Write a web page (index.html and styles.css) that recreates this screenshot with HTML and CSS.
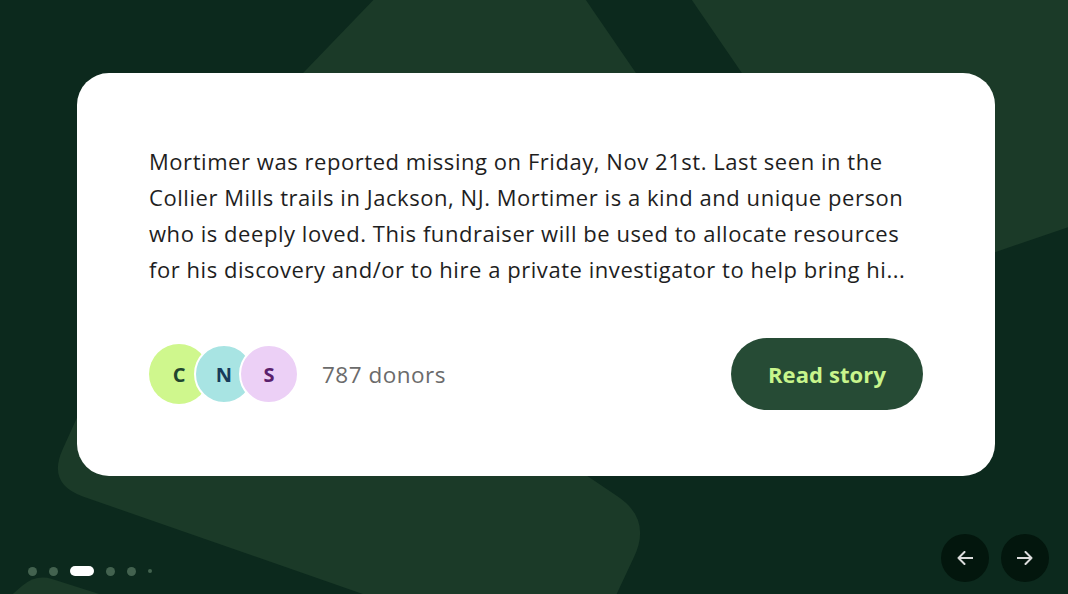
FILE: index.html
```html
<!DOCTYPE html>
<html lang="en">
<head>
<meta charset="utf-8">
<title>Story</title>
<link rel="stylesheet" href="styles.css">
</head>
<body>
<div class="stage">
  <svg class="bg" viewBox="0 0 1068 594" width="1068" height="594" aria-hidden="true">
    <path class="shape" d="M383,-10 L579,-10 L723,200 L181,200 Z"/>
    <path class="shape" d="M685,-10 L1080,-10 L1080,223 L900,285 L829,200 Z"/>
    <path class="shape" d="M94,380 L62.6,449.4 Q47,484 82.9,496.5 L581,670 L634,557 Q652,519 617,496 L445,380 Z"/>
    <path class="shape" d="M6,600 L22,586 Q36,574 52,579 L118,600 Z"/>
  </svg>

  <article class="card">
    <p class="story">Mortimer was reported missing on Friday, Nov 21st. Last seen in the Collier Mills trails in Jackson, NJ. Mortimer is a kind and unique person who is deeply loved. This fundraiser will be used to allocate resources for his discovery and/or to hire a private investigator to help bring hi...</p>
    <div class="card-foot">
      <div class="donors">
        <div class="avatars">
          <span class="avatar av-c">C</span>
          <span class="avatar av-n">N</span>
          <span class="avatar av-s">S</span>
        </div>
        <span class="count">787 donors</span>
      </div>
      <button class="read" type="button">Read story</button>
    </div>
  </article>

  <div class="controls">
    <div class="dots">
      <span class="dot"></span>
      <span class="dot"></span>
      <span class="dot active"></span>
      <span class="dot"></span>
      <span class="dot"></span>
      <span class="dot tiny"></span>
    </div>
    <div class="arrows">
      <button class="arrow" type="button" aria-label="Previous">
        <svg viewBox="0 0 16 14" width="16" height="14"><path d="M15.5 7H1.5M7.5 1L1.5 7l6 6" fill="none" stroke="#dcdcdc" stroke-width="2" stroke-linecap="round" stroke-linejoin="round"/></svg>
      </button>
      <button class="arrow" type="button" aria-label="Next">
        <svg viewBox="0 0 16 14" width="16" height="14"><path d="M0.5 7H14.5M8.5 1l6 6-6 6" fill="none" stroke="#dcdcdc" stroke-width="2" stroke-linecap="round" stroke-linejoin="round"/></svg>
      </button>
    </div>
  </div>
</div>
</body>
</html>
```

FILE: styles.css
```css
* { box-sizing: border-box; }

html, body {
  margin: 0;
  padding: 0;
  background: #0c291d;
}

.stage {
  position: relative;
  width: 1068px;
  height: 594px;
  overflow: hidden;
  background: #0c291d;
  display: flex;
  flex-direction: column;
  font-family: "Open Sans", "Noto Sans", sans-serif;
}

.bg {
  position: absolute;
  left: 0;
  top: 0;
}

.shape { fill: #1b3a28; }

.card {
  position: relative;
  margin: 73px 73px 0 77px;
  height: 403px;
  background: #ffffff;
  border-radius: 32px;
  padding: 70px 72px 66px 72px;
  display: flex;
  flex-direction: column;
  justify-content: space-between;
}

.story {
  margin: 0;
  font-size: 22px;
  line-height: 36px;
  letter-spacing: 0.55px;
  color: #1e1e1e;
}

.card-foot {
  display: flex;
  align-items: center;
  justify-content: space-between;
}

.donors {
  display: flex;
  align-items: center;
  gap: 23px;
}

.avatars { display: flex; }

.avatar {
  width: 60px;
  height: 60px;
  border-radius: 50%;
  display: flex;
  align-items: center;
  justify-content: center;
  font-size: 20px;
  font-weight: 700;
  border: 2px solid #ffffff;
}

.avatar + .avatar { margin-left: -15px; }

.av-c { background: #cff78d; color: #21452f; border-color: transparent; }
.av-n { background: #a8e4e3; color: #173b5a; }
.av-s { background: #ecd0f6; color: #5b206c; }

.count {
  font-size: 22.5px;
  letter-spacing: 0.5px;
  color: #6b6b6b;
}

.read {
  width: 192px;
  height: 72px;
  border: 0;
  border-radius: 36px;
  background: #264b35;
  color: #c8f58c;
  font-family: inherit;
  font-size: 22px;
  font-weight: 700;
  letter-spacing: 0.1px;
  cursor: pointer;
}

.controls {
  margin-top: auto;
  padding: 0 19px 12px 28px;
  display: flex;
  align-items: flex-end;
  justify-content: space-between;
}

.dots {
  display: flex;
  align-items: center;
  gap: 12px;
  height: 10px;
  margin-bottom: 6px;
}

.dot {
  width: 9px;
  height: 9px;
  border-radius: 5px;
  background: #43624f;
}

.dot.active {
  width: 24px;
  height: 10px;
  background: #ffffff;
}

.dot.tiny {
  width: 4px;
  height: 4px;
}

.arrows {
  display: flex;
  gap: 12px;
}

.arrow {
  width: 48px;
  height: 48px;
  border-radius: 50%;
  border: 0;
  background: #03160d;
  display: flex;
  align-items: center;
  justify-content: center;
  padding: 0;
  cursor: pointer;
}
```
